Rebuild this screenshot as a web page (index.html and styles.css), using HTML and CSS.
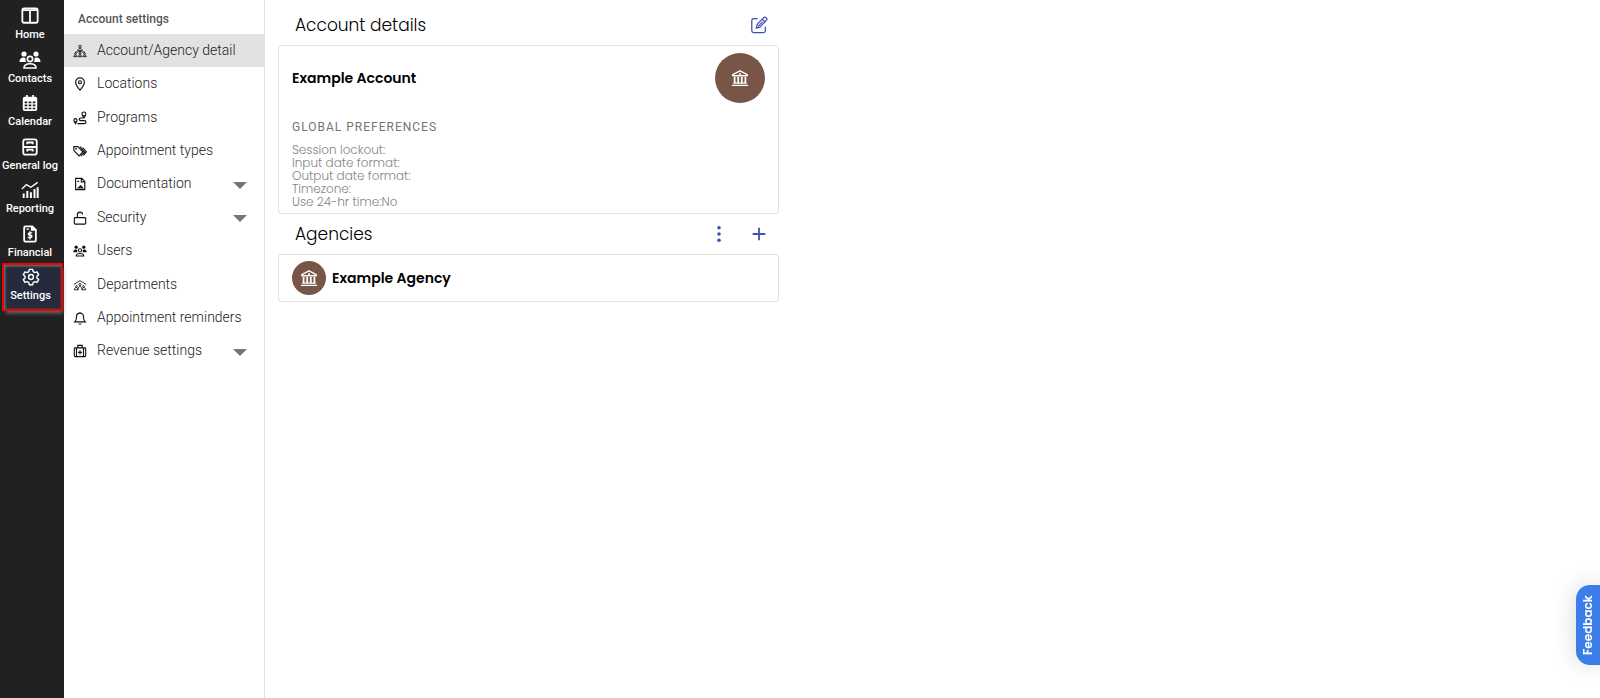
FILE: index.html
```html
<!DOCTYPE html>
<html lang="en">
  <head>
    <title>Account settings</title>
    <meta charset="utf-8">
    <link rel="stylesheet" href="styles.css">
  </head>
  <body>
  <svg class="defs" aria-hidden="true">
    <symbol id="bank" viewBox="0 0 20 20">
      <path fill="none" stroke="currentColor" stroke-width="1.5" stroke-linejoin="round" d="M2 6.2 10 2l8 4.2v1.3H2z"/>
      <path fill="currentColor" d="M9 4.6h2v2H9zM3 9h2v6.500H3zM7 9h2v6.500H7zM11 9h2v6.500h-2zM15 9h2v6.500h-2zM2.500 15h15v1.500h-15zM1 17.500h18V19H1z"/>
    </symbol>
    <symbol id="people" viewBox="0 0 22 18">
      <g fill="currentColor">
        <circle cx="5" cy="3" r="2.600"/><circle cx="17" cy="3" r="2.600"/>
        <path d="M.5 11c0-3 1.500-4.500 4-4.500 1 0 1.700.3 2.200.7-.5 1.500-.2 2.800.6 3.800zM21.500 11c0-3-1.500-4.500-4-4.500-1 0-1.700.3-2.200.7.5 1.500.2 2.800-.6 3.800z"/>
      </g>
      <g fill="none" stroke="currentColor" stroke-width="1.600">
        <circle cx="11" cy="8" r="2.600"/><path d="M5 17c0-2.800 2-4.200 6-4.200s6 1.400 6 4.200z"/>
      </g>
    </symbol>
  </svg>

  <div class="app">
    <nav class="rail" aria-label="Main">
      <ul class="rail-list">
        <li><a href="#">
          <svg viewBox="0 0 20 20"><rect x="1.500" y="1.500" width="17" height="16" rx="2"/><path d="M10 4v13M2 3.500h16"/></svg>
          <span>Home</span></a></li>
        <li><a href="#">
          <svg class="wide"><use href="#people"/></svg>
          <span>Contacts</span></a></li>
        <li><a href="#">
          <svg viewBox="0 0 20 20"><path class="solid" fill-rule="evenodd" d="M5.500 1v2H4a2 2 0 0 0-2 2v2h16V5a2 2 0 0 0-2-2h-1.500V1h-2v2h-5V1zM2 7v10a2 2 0 0 0 2 2h12a2 2 0 0 0 2-2V7zm2 1.200h3v2H4zm4.500 0h3v2h-3zm4.500 0h3v2h-3zM4 11.700h3v2H4zm4.500 0h3v2h-3zm4.500 0h3v2h-3zM4 15.200h3v1.800H4zm4.500 0h3v1.800h-3zm4.500 0h3v1.800h-3z"/></svg>
          <span>Calendar</span></a></li>
        <li><a href="#">
          <svg viewBox="0 0 20 20"><rect x="2.500" y="1.500" width="15" height="17" rx="2.500"/><path d="M3 10h14M7 7V5h6v2M7 15v-2h6v2"/></svg>
          <span>General log</span></a></li>
        <li><a href="#">
          <svg viewBox="0 0 20 20"><path class="thin" d="m1 9 5-5 5 3 7.500-5.500"/><path class="bars" d="M3 14v5M7 11v8M11 12.500V19M15 9v10M18.500 7v12"/></svg>
          <span>Reporting</span></a></li>
        <li><a href="#">
          <svg viewBox="0 0 20 20"><path d="M5 1.500h7.500l4 4V17a1.500 1.500 0 0 1-1.500 1.500H5A1.500 1.500 0 0 1 3.500 17V3A1.500 1.500 0 0 1 5 1.500z"/><path class="thin" d="M12.500 8.700H9.300c-1.700 0-1.700 2.500 0 2.500h1.400c1.900 0 1.900 2.700 0 2.700H7.500M10 7v9M6 4.500h3"/><path class="solid" d="M11 1.500h2l4 4v1h-6z"/></svg>
          <span>Financial</span></a></li>
        <li class="current"><a href="#" aria-current="page">
          <svg viewBox="0 0 20 20"><path class="gear" d="M8.200 1.500h3.600l.6 2.600 1.800 1 2.500-.8 1.800 3.100-1.900 1.800v1.900l1.900 1.800-1.800 3.100-2.500-.8-1.800 1-.6 2.500H8.200l-.6-2.500-1.800-1-2.500.8-1.800-3.100 1.900-1.800V9.200L1.500 7.400l1.800-3.100 2.500.8 1.800-1z"/><circle class="gear" cx="10" cy="10" r="2.700"/></svg>
          <span>Settings</span></a></li>
      </ul>
    </nav>

    <nav class="side" aria-labelledby="side-title">
      <h2 class="side-title" id="side-title">Account settings</h2>
      <ul class="side-list">
        <li class="active"><a href="#" aria-current="page">
          <svg class="fine" viewBox="0 0 16 16"><circle cx="8" cy="3" r="1.500"/><path d="M5.500 7.500c0-3 5-3 5 0zM8 7.500V10M3 10V9h10v1"/><circle cx="2.800" cy="11" r="1"/><circle cx="8" cy="11" r="1"/><circle cx="13.200" cy="11" r="1"/><path d="M.8 14.500c0-2.500 4-2.500 4 0zM6 14.500c0-2.500 4-2.500 4 0zM11.200 14.500c0-2.500 4-2.500 4 0z"/></svg>
          Account/Agency detail</a></li>
        <li><a href="#">
          <svg viewBox="0 0 16 16"><path d="M8 15S3 9.500 3 6a5 5 0 0 1 10 0c0 3.500-5 9-5 9z"/><circle cx="8" cy="6" r="1.700"/></svg>
          Locations</a></li>
        <li><a href="#">
          <svg viewBox="0 0 16 16"><circle cx="2.800" cy="10.500" r="1.800"/><path d="m1.300 12 1.500 2.500L4.300 12"/><circle cx="12.500" cy="3.300" r="2.200"/><path d="m10.700 5 1.800 3 1.800-3M11.500 8H9c-2.500 0-2.500 3 0 3h4c2.500 0 2.500 3.500 0 3.500H5"/></svg>
          Programs</a></li>
        <li><a href="#">
          <svg viewBox="0 0 16 16"><path d="M1 3v4.500l6 6L11.300 9 5.500 3zM8 3l5.300 6L9 13.800M11 4l4.300 5-3.300 4"/><circle cx="3.500" cy="5.500" r=".4"/></svg>
          Appointment types</a></li>
        <li><button type="button">
          <svg viewBox="0 0 16 16"><path d="M3 1.500h7l3.500 3.500v9.500H3zM9.500 1.500V5.500h4M5 5h2M6 12.500h5L8.800 10z"/></svg>
          Documentation<i class="caret"></i></button></li>
        <li><button type="button">
          <svg viewBox="0 0 16 16"><rect x="1.500" y="7.500" width="13" height="7.500" rx="1"/><path d="M5 7.500V4.500a3 3 0 0 1 6-.5"/></svg>
          Security<i class="caret"></i></button></li>
        <li><a href="#">
          <svg class="filled"><use href="#people"/></svg>
          Users</a></li>
        <li><a href="#">
          <svg class="fine" viewBox="0 0 16 16"><path d="M.8 7.500 8 3l7.200 4.500"/><circle cx="8" cy="7.500" r="1.200"/><circle cx="4" cy="9.700" r="1"/><circle cx="12" cy="9.700" r="1"/><path d="M5.800 13.500c0-5 4.400-5 4.400 0M1.500 13.500c0-3.500 4.300-3.500 4.300 0zM10.200 13.500c0-3.500 4.300-3.500 4.300 0z"/></svg>
          Departments</a></li>
        <li><a href="#">
          <svg viewBox="0 0 16 16"><path d="M2 12.500h12c-2-1.500-2-3-2-6a4 4 0 0 0-8 0c0 3 0 4.500-2 6zM8 2.500V1M6.500 14.800h3"/></svg>
          Appointment reminders</a></li>
        <li><button type="button">
          <svg viewBox="0 0 16 16"><rect x="1.500" y="4.500" width="13" height="10" rx="1"/><path d="M5.500 4.500v-3h5v3M4 4.500v10M12 4.500v10M8 7v5M5.700 9.500h4.600"/></svg>
          Revenue settings<i class="caret"></i></button></li>
      </ul>
    </nav>

    <main class="content">
      <section>
        <header class="section-head">
          <h1>Account details</h1>
          <button type="button" aria-label="Edit">
            <svg viewBox="0 0 20 20"><path d="M8.500 3H4a2 2 0 0 0-2 2v11.500a2 2 0 0 0 2 2h11a2 2 0 0 0 2-2V12"/><path d="m7 13.500 1-4.300 7.300-7.300a1.700 1.700 0 0 1 2.500 0l.4.400a1.700 1.700 0 0 1 0 2.500L11 12.300zM13.700 3.700l2.700 2.700M9 11.500l5-5"/></svg>
          </button>
        </header>
        <div class="card">
          <div class="account">
            <h3>Example Account</h3>
            <span class="avatar big"><svg><use href="#bank"/></svg></span>
          </div>
          <h4>GLOBAL PREFERENCES</h4>
          <ul class="prefs">
            <li>Session lockout:</li>
            <li>Input date format:</li>
            <li>Output date format:</li>
            <li>Timezone:</li>
            <li>Use 24-hr time:No</li>
          </ul>
        </div>
      </section>

      <section>
        <header class="section-head">
          <h1>Agencies</h1>
          <button type="button" aria-label="More">
            <svg viewBox="0 0 20 20"><g class="dots"><circle cx="10" cy="3" r="2"/><circle cx="10" cy="10" r="2"/><circle cx="10" cy="17" r="2"/></g></svg>
          </button>
          <button type="button" aria-label="Add">
            <svg class="plus" viewBox="0 0 20 20"><path d="M10 3v14M3 10h14"/></svg>
          </button>
        </header>
        <div class="card agency">
          <span class="avatar"><svg><use href="#bank"/></svg></span>
          <h3>Example Agency</h3>
        </div>
      </section>
    </main>
  </div>

  <button type="button" class="feedback">Feedback</button>
  </body>
</html>
```
FILE: styles.css
```css
* {
  box-sizing: border-box;
}
body {
  margin: 0;
  background: #fff;
  font-family: Roboto, sans-serif;
  font-size: 14px;
}
h1, h2, h3, h4, ul {
  margin: 0;
  padding: 0;
}
ul {
  list-style: none;
}
a {
  color: inherit;
  text-decoration: none;
}
button {
  border: 0;
  padding: 0;
  background: none;
  color: inherit;
  font: inherit;
  cursor: pointer;
}
.defs {
  display: none;
}

.app {
  display: flex;
  min-height: 100vh;
}

/* dark rail */
.rail {
  width: 64px;
  flex: none;
  padding-top: 4px;
  background: #212121;
  color: #fff;
}
.rail-list {
  display: flex;
  flex-direction: column;
  height: 305px;
}
.rail-list li {
  flex: 1;
}
.rail-list a {
  display: flex;
  flex-direction: column;
  align-items: center;
  gap: 3px;
  height: 100%;
  padding: 3px 4px 0 0;
  font-size: 11px;
  font-weight: 500;
  line-height: 14px;
  white-space: nowrap;
}
.rail svg {
  width: 18px;
  height: 18px;
  fill: none;
  stroke: #fff;
  stroke-width: 2;
}
.rail svg.wide {
  width: 22px;
  stroke: none;
}
.rail .solid {
  fill: #fff;
  stroke: none;
}
.rail .thin {
  stroke-width: 1.5;
}
.rail .bars {
  stroke-width: 2.2;
}
.rail .gear {
  stroke-width: 1.6;
  stroke-linejoin: round;
}
.rail-list .current {
  margin: 0 3px 0 4px;
  outline: 2px solid #f00000;
  background: #252a3d;
  box-shadow: 2px 4px 4px rgba(130,130,130,0.8), inset 1px 1px 3px rgba(150,150,150,0.8);
  z-index: 1;
}

/* settings menu */
.side {
  width: 201px;
  flex: none;
  border-right: 1px solid #e0e0e0;
}
.side-title {
  height: 34px;
  padding: 5px 14px 0;
  color: #555;
  font-size: 12px;
  font-weight: 500;
  line-height: 28px;
}
.side-list {
  display: flex;
  flex-direction: column;
  height: 334px;
}
.side-list li {
  flex: 1;
}
.side-list a, .side-list button {
  display: flex;
  align-items: center;
  gap: 10px;
  width: 100%;
  height: 100%;
  padding: 0 17px 2px 9px;
  color: #222;
  font-weight: 300;
  text-align: left;
}
.side-list .active {
  background: #e2e2e2;
}
.side-list svg {
  width: 14px;
  height: 14px;
  flex: none;
  margin-top: 2px;
  fill: none;
  stroke: #111;
  stroke-width: 1.3;
  color: #111;
}
.side-list svg.fine {
  stroke-width: 1;
}
.side-list svg.filled {
  stroke: none;
}
.caret {
  margin: 4px 0 0 auto;
  border: 7px solid transparent;
  border-top-color: #757575;
  border-bottom: 0;
}

/* page */
.content {
  flex: 1;
  max-width: 527px;
  padding: 0 13px;
  font-family: Poppins, Inter, sans-serif;
}
.section-head {
  display: flex;
  align-items: center;
  gap: 20px;
  height: 40px;
  padding: 0 10px 0 17px;
}
section:first-child .section-head {
  height: 45px;
  padding-top: 5px;
}
.section-head h1 {
  margin-right: auto;
  font-size: 17px;
  font-weight: 300;
}
.section-head button {
  display: flex;
  align-items: center;
  justify-content: center;
  width: 20px;
  height: 20px;
}
.section-head svg {
  width: 18px;
  height: 18px;
  fill: none;
  stroke: #3f51b5;
  stroke-width: 1.4;
}
.section-head .dots {
  fill: #3f51b5;
  stroke: none;
}
.section-head .plus {
  stroke-width: 2;
}
.card {
  padding: 7px 13px 5px;
  border: 1px solid #e0e0e0;
  border-radius: 3px;
}
.card h3 {
  font-size: 14px;
  font-weight: 600;
  line-height: 20px;
}
.card h4 {
  margin: 16px 0 8px;
  color: #757575;
  font-family: Roboto, sans-serif;
  font-size: 12px;
  font-weight: 400;
  letter-spacing: 1px;
  line-height: 16px;
}
.account {
  display: flex;
  align-items: center;
  justify-content: space-between;
}
.prefs {
  color: #858585;
  font-size: 12px;
  font-weight: 300;
  line-height: 13px;
}
.avatar {
  display: flex;
  align-items: center;
  justify-content: center;
  width: 34px;
  height: 34px;
  border-radius: 50%;
  background: #795548;
  color: #fff;
}
.avatar.big {
  width: 50px;
  height: 50px;
}
.avatar svg {
  width: 18px;
  height: 18px;
}
.agency {
  display: flex;
  align-items: center;
  gap: 6px;
  padding: 6px 13px;
}

.feedback {
  position: fixed;
  right: 0;
  top: 585px;
  width: 24px;
  height: 80px;
  border-radius: 0 14px 14px 0;
  background: #3b7eea;
  box-shadow: 0 0 24px rgba(0,0,0,0.16);
  color: #fff;
  font: 600 12px Poppins, Inter, sans-serif;
  writing-mode: vertical-rl;
  transform: rotate(180deg);
}
```
